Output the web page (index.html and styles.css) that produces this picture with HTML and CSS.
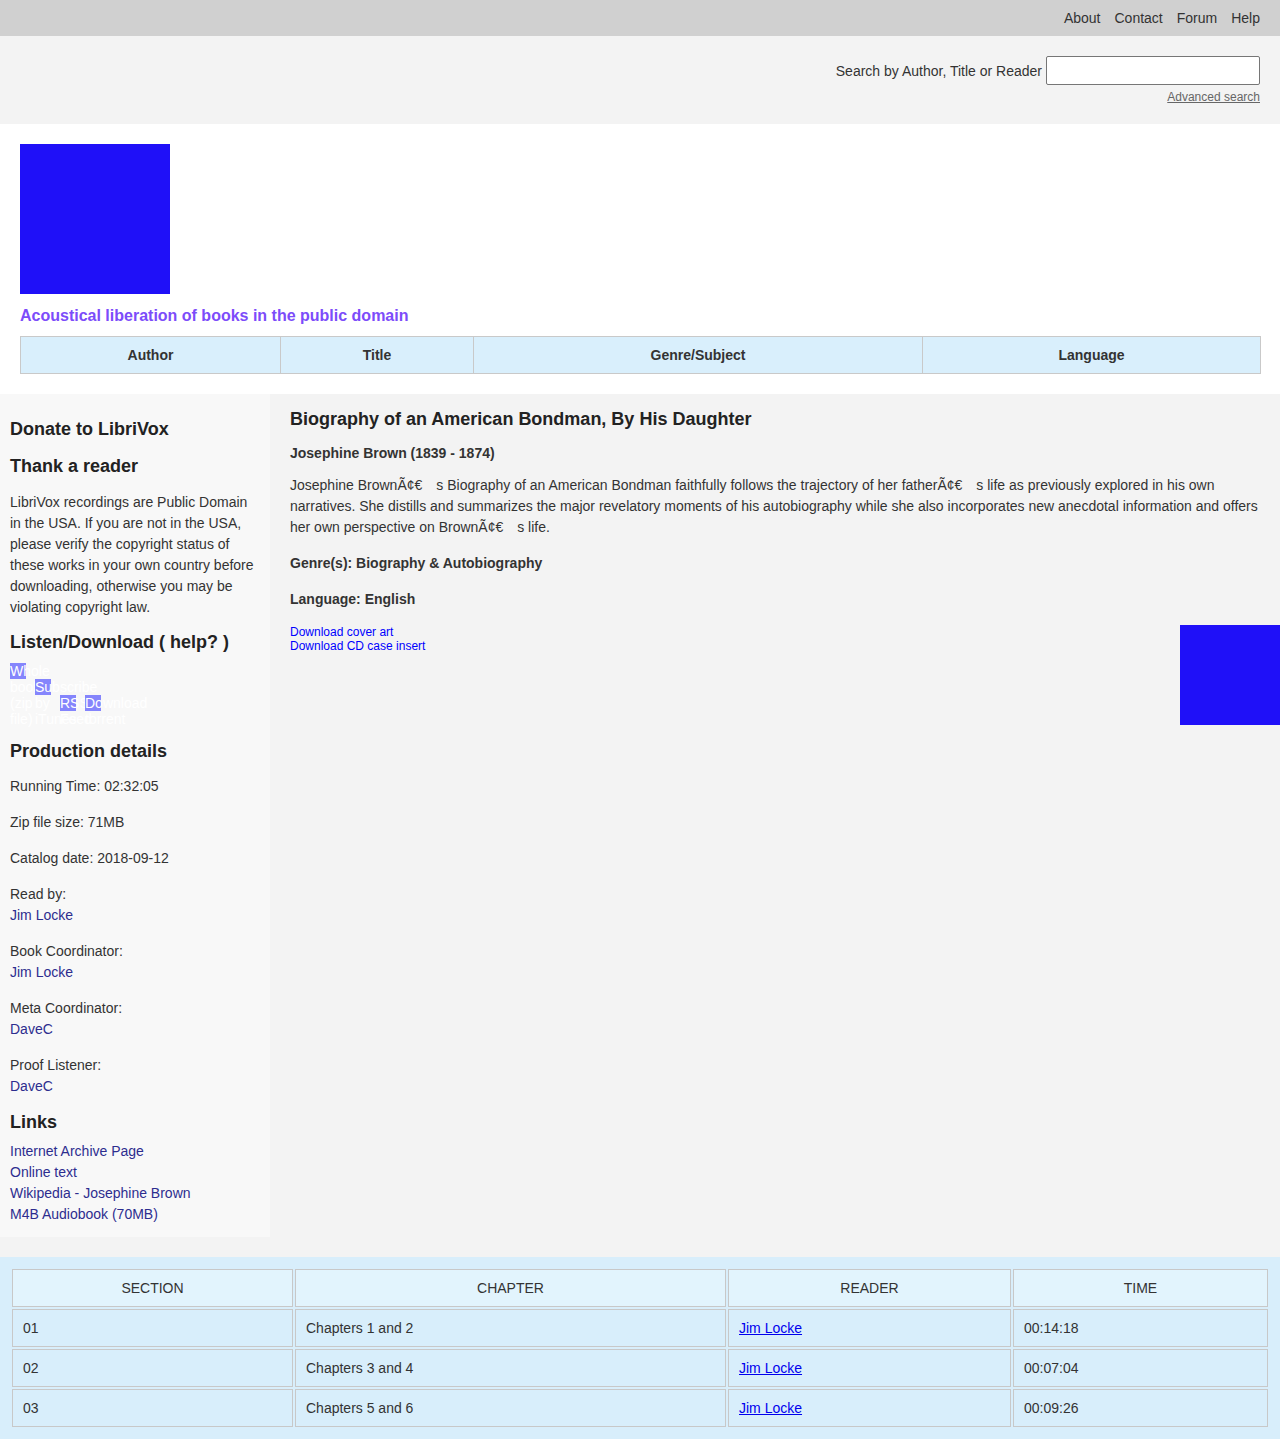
FILE: index.html
```html
<!DOCTYPE html>
<html lang="en">
<head>
<meta charset="utf-8">
<title>Biography of an American Bondman, By His Daughter - LibriVox</title>
<link rel="stylesheet" href="styles.css">
</head>
<body>
<nav class="topbar">
  <a href="#">About</a>
  <a href="#">Contact</a>
  <a href="#">Forum</a>
  <a href="#">Help</a>
</nav>

<div class="searchbar">
  <form class="search-form">
    <label for="q">Search by Author, Title or Reader</label>
    <input id="q" type="text">
  </form>
  <div class="adv-row"><a class="adv" href="#">Advanced search</a></div>
</div>

<header class="masthead">
  <div class="logo"></div>
  <p class="tagline">Acoustical liberation of books in the public domain</p>
  <table class="browse">
    <colgroup>
      <col class="c-author"><col class="c-title"><col class="c-genre"><col class="c-lang">
    </colgroup>
    <tr>
      <th>Author</th>
      <th>Title</th>
      <th>Genre/Subject</th>
      <th>Language</th>
    </tr>
  </table>
</header>

<div class="page">
  <aside class="sidebar">
    <h3 class="side-h h-donate">Donate to LibriVox</h3>
    <h3 class="side-h h-thank">Thank a reader</h3>
    <p class="side-p intro">LibriVox recordings are Public Domain in the USA. If you are not in the USA, please verify the copyright status of these works in your own country before downloading, otherwise you may be violating copyright law.</p>
    <h3 class="side-h h-listen">Listen/Download ( help? )</h3>
    <div class="dl-buttons"><a class="dl-btn" href="#">Whole book (zip file)</a><a class="dl-btn" href="#">Subscribe by iTunes</a><a class="dl-btn" href="#">RSS Feed</a><a class="dl-btn" href="#">Download torrent</a></div>
    <h3 class="side-h h-prod">Production details</h3>
    <p class="side-p">Running Time: 02:32:05</p>
    <p class="side-p">Zip file size: 71MB</p>
    <p class="side-p">Catalog date: 2018-09-12</p>
    <p class="side-p">Read by:<br><a class="side-link" href="#">Jim Locke</a></p>
    <p class="side-p">Book Coordinator:<br><a class="side-link" href="#">Jim Locke</a></p>
    <p class="side-p">Meta Coordinator:<br><a class="side-link" href="#">DaveC</a></p>
    <p class="side-p">Proof Listener:<br><a class="side-link" href="#">DaveC</a></p>
    <h3 class="side-h h-links">Links</h3>
    <ul class="link-list">
      <li><a class="side-link" href="#">Internet Archive Page</a></li>
      <li><a class="side-link" href="#">Online text</a></li>
      <li><a class="side-link" href="#">Wikipedia - Josephine Brown</a></li>
      <li><a class="side-link" href="#">M4B Audiobook (70MB)</a></li>
    </ul>
  </aside>

  <main class="content">
    <h2 class="book-title">Biography of an American Bondman, By His Daughter</h2>
    <p class="book-author">Josephine Brown (1839 - 1874)</p>
    <p class="book-desc">Josephine BrownÃ¢€&ensp;&ensp;s Biography of an American Bondman faithfully follows the trajectory of her fatherÃ¢€&ensp;&ensp;s life as previously explored in his own narratives. She distills and summarizes the major revelatory moments of his autobiography while she also incorporates new anecdotal information and offers her own perspective on BrownÃ¢€&ensp;&ensp;s life.</p>
    <p class="book-meta">Genre(s): Biography &amp; Autobiography</p>
    <p class="book-meta">Language: English</p>
    <div class="downloads">
      <div class="download-links">
        <a href="#">Download cover art</a>
        <a href="#">Download CD case insert</a>
      </div>
      <div class="cover"></div>
    </div>
  </main>
</div>

<section class="chapters">
  <table class="chapter-table">
    <colgroup>
      <col class="c-section"><col class="c-chapter"><col class="c-reader"><col class="c-time">
    </colgroup>
    <thead>
      <tr><th>SECTION</th><th>CHAPTER</th><th>READER</th><th>TIME</th></tr>
    </thead>
    <tbody>
      <tr><td>01</td><td>Chapters 1 and 2</td><td><a href="#">Jim Locke</a></td><td>00:14:18</td></tr>
      <tr><td>02</td><td>Chapters 3 and 4</td><td><a href="#">Jim Locke</a></td><td>00:07:04</td></tr>
      <tr><td>03</td><td>Chapters 5 and 6</td><td><a href="#">Jim Locke</a></td><td>00:09:26</td></tr>
    </tbody>
  </table>
</section>
</body>
</html>
```

FILE: styles.css
```css
* { box-sizing: border-box; }

html, body {
  margin: 0;
  padding: 0;
}

body {
  font-family: "Liberation Sans", Arial, sans-serif;
  font-size: 14px;
  line-height: 21px;
  color: #333;
  background: #fff;
}

/* top nav */
.topbar {
  height: 36px;
  background: #d0d0d0;
  display: flex;
  justify-content: flex-end;
  align-items: center;
  gap: 14px;
  padding: 0 20px;
}
.topbar a {
  color: #333;
  text-decoration: none;
  font-size: 14px;
  line-height: 16px;
}

/* search */
.searchbar {
  background: #f3f3f3;
  padding: 20px 20px;
}
.search-form {
  margin: 0;
  height: 29px;
  display: flex;
  justify-content: flex-end;
  align-items: center;
  gap: 4px;
}
.search-form label {
  font-size: 14px;
  line-height: 16px;
  color: #333;
}
.search-form input {
  width: 214px;
  height: 29px;
  border: 1px solid #767676;
  border-radius: 2px;
  background: #fff;
  margin: 0;
  padding: 1px 2px;
  font: 13px "Liberation Sans", Arial, sans-serif;
}
.adv-row {
  margin-top: 5px;
  height: 14px;
  text-align: right;
  line-height: 14px;
  font-size: 12px;
}
.adv {
  font-size: 12px;
  color: #666;
  text-decoration: underline;
}

/* masthead */
.masthead {
  background: #fff;
  padding: 20px;
}
.logo {
  width: 150px;
  height: 150px;
  background: #1f10f8;
}
.tagline {
  margin: 12px 0 11px;
  font-size: 16px;
  line-height: 19px;
  font-weight: bold;
  color: #7c4cfa;
}
.browse {
  width: 1240px;
  border-collapse: collapse;
  table-layout: fixed;
  background: #d9effc;
}
.c-author { width: 260px; }
.c-title { width: 193px; }
.c-genre { width: 449px; }
.c-lang { width: 338px; }
.browse th {
  border: 1px solid #c9c9c9;
  height: 37px;
  padding: 0;
  font-size: 14px;
  line-height: 16px;
  font-weight: bold;
  color: #333;
  text-align: center;
}

/* page body */
.page {
  display: flex;
  align-items: flex-start;
  background: #f3f3f3;
  padding-bottom: 20px;
}

.sidebar {
  width: 270px;
  flex: 0 0 270px;
  background: #f8f8f8;
  padding: 25px 10px 12px;
}
.side-h {
  font-size: 18px;
  line-height: 21px;
  font-weight: bold;
  color: #222;
  margin: 0 0 15px;
}
.h-donate { margin-bottom: 16px; }
.h-thank { margin-bottom: 15px; }
.h-listen { margin-bottom: 10px; }
.h-prod { margin-bottom: 14px; }
.h-links { margin-bottom: 8px; }

.side-p {
  margin: 0 0 15px;
  font-size: 14px;
  line-height: 21px;
  color: #333;
}
.side-p.intro { margin-bottom: 14px; }

.side-link {
  color: #2d2d8f;
  text-decoration: none;
}

.link-list {
  list-style: none;
  margin: 0;
  padding: 0;
  line-height: 21px;
}

/* download buttons: narrow boxes whose labels overflow */
.dl-buttons {
  margin: 0 0 14px;
  font-size: 14px;
  line-height: 16px;
}
.dl-btn {
  display: inline-block;
  width: 16px;
  height: 16px;
  margin-right: 9px;
  background: #8585fc;
  color: #fff;
  text-decoration: none;
  font-size: 14px;
  line-height: 16px;
  vertical-align: baseline;
}

/* main content */
.content {
  flex: 1;
  padding: 15px 20px 0;
  min-width: 0;
}
.book-title {
  margin: 0;
  font-size: 18px;
  line-height: 21px;
  font-weight: bold;
  color: #222;
}
.book-author {
  margin: 13px 0 11px;
  font-weight: bold;
  font-size: 14px;
  line-height: 21px;
}
.book-desc {
  margin: 0 0 15px;
  font-size: 14px;
  line-height: 21px;
}
.book-meta {
  margin: 0 0 15px;
  font-weight: bold;
  font-size: 14px;
  line-height: 21px;
}
.downloads {
  display: flex;
  justify-content: space-between;
  align-items: flex-start;
  margin-right: -20px;
}
.download-links {
  display: flex;
  flex-direction: column;
  font-size: 12px;
  line-height: 14px;
}
.download-links a {
  color: #0000ff;
  text-decoration: none;
}
.cover {
  width: 100px;
  height: 100px;
  margin-top: 0;
  background: #1f10f8;
}

/* chapters */
.chapters {
  background: #d8eefb;
  padding: 10px;
}
.chapter-table {
  width: 100%;
  table-layout: fixed;
  border-collapse: separate;
  border-spacing: 2px;
}
.c-section { width: 281px; }
.c-chapter { width: 431px; }
.c-reader { width: 283px; }
.c-time { width: 255px; }
.chapter-table th,
.chapter-table td {
  border: 1px solid #c8c8c8;
  padding: 10px 10px;
  font-size: 14px;
  line-height: 16px;
  color: #333;
}
.chapter-table th {
  background: #e2f4fd;
  font-weight: normal;
  text-align: center;
}
.chapter-table td {
  text-align: left;
}
.chapter-table td a {
  color: #0000ee;
  text-decoration: underline;
}
```
